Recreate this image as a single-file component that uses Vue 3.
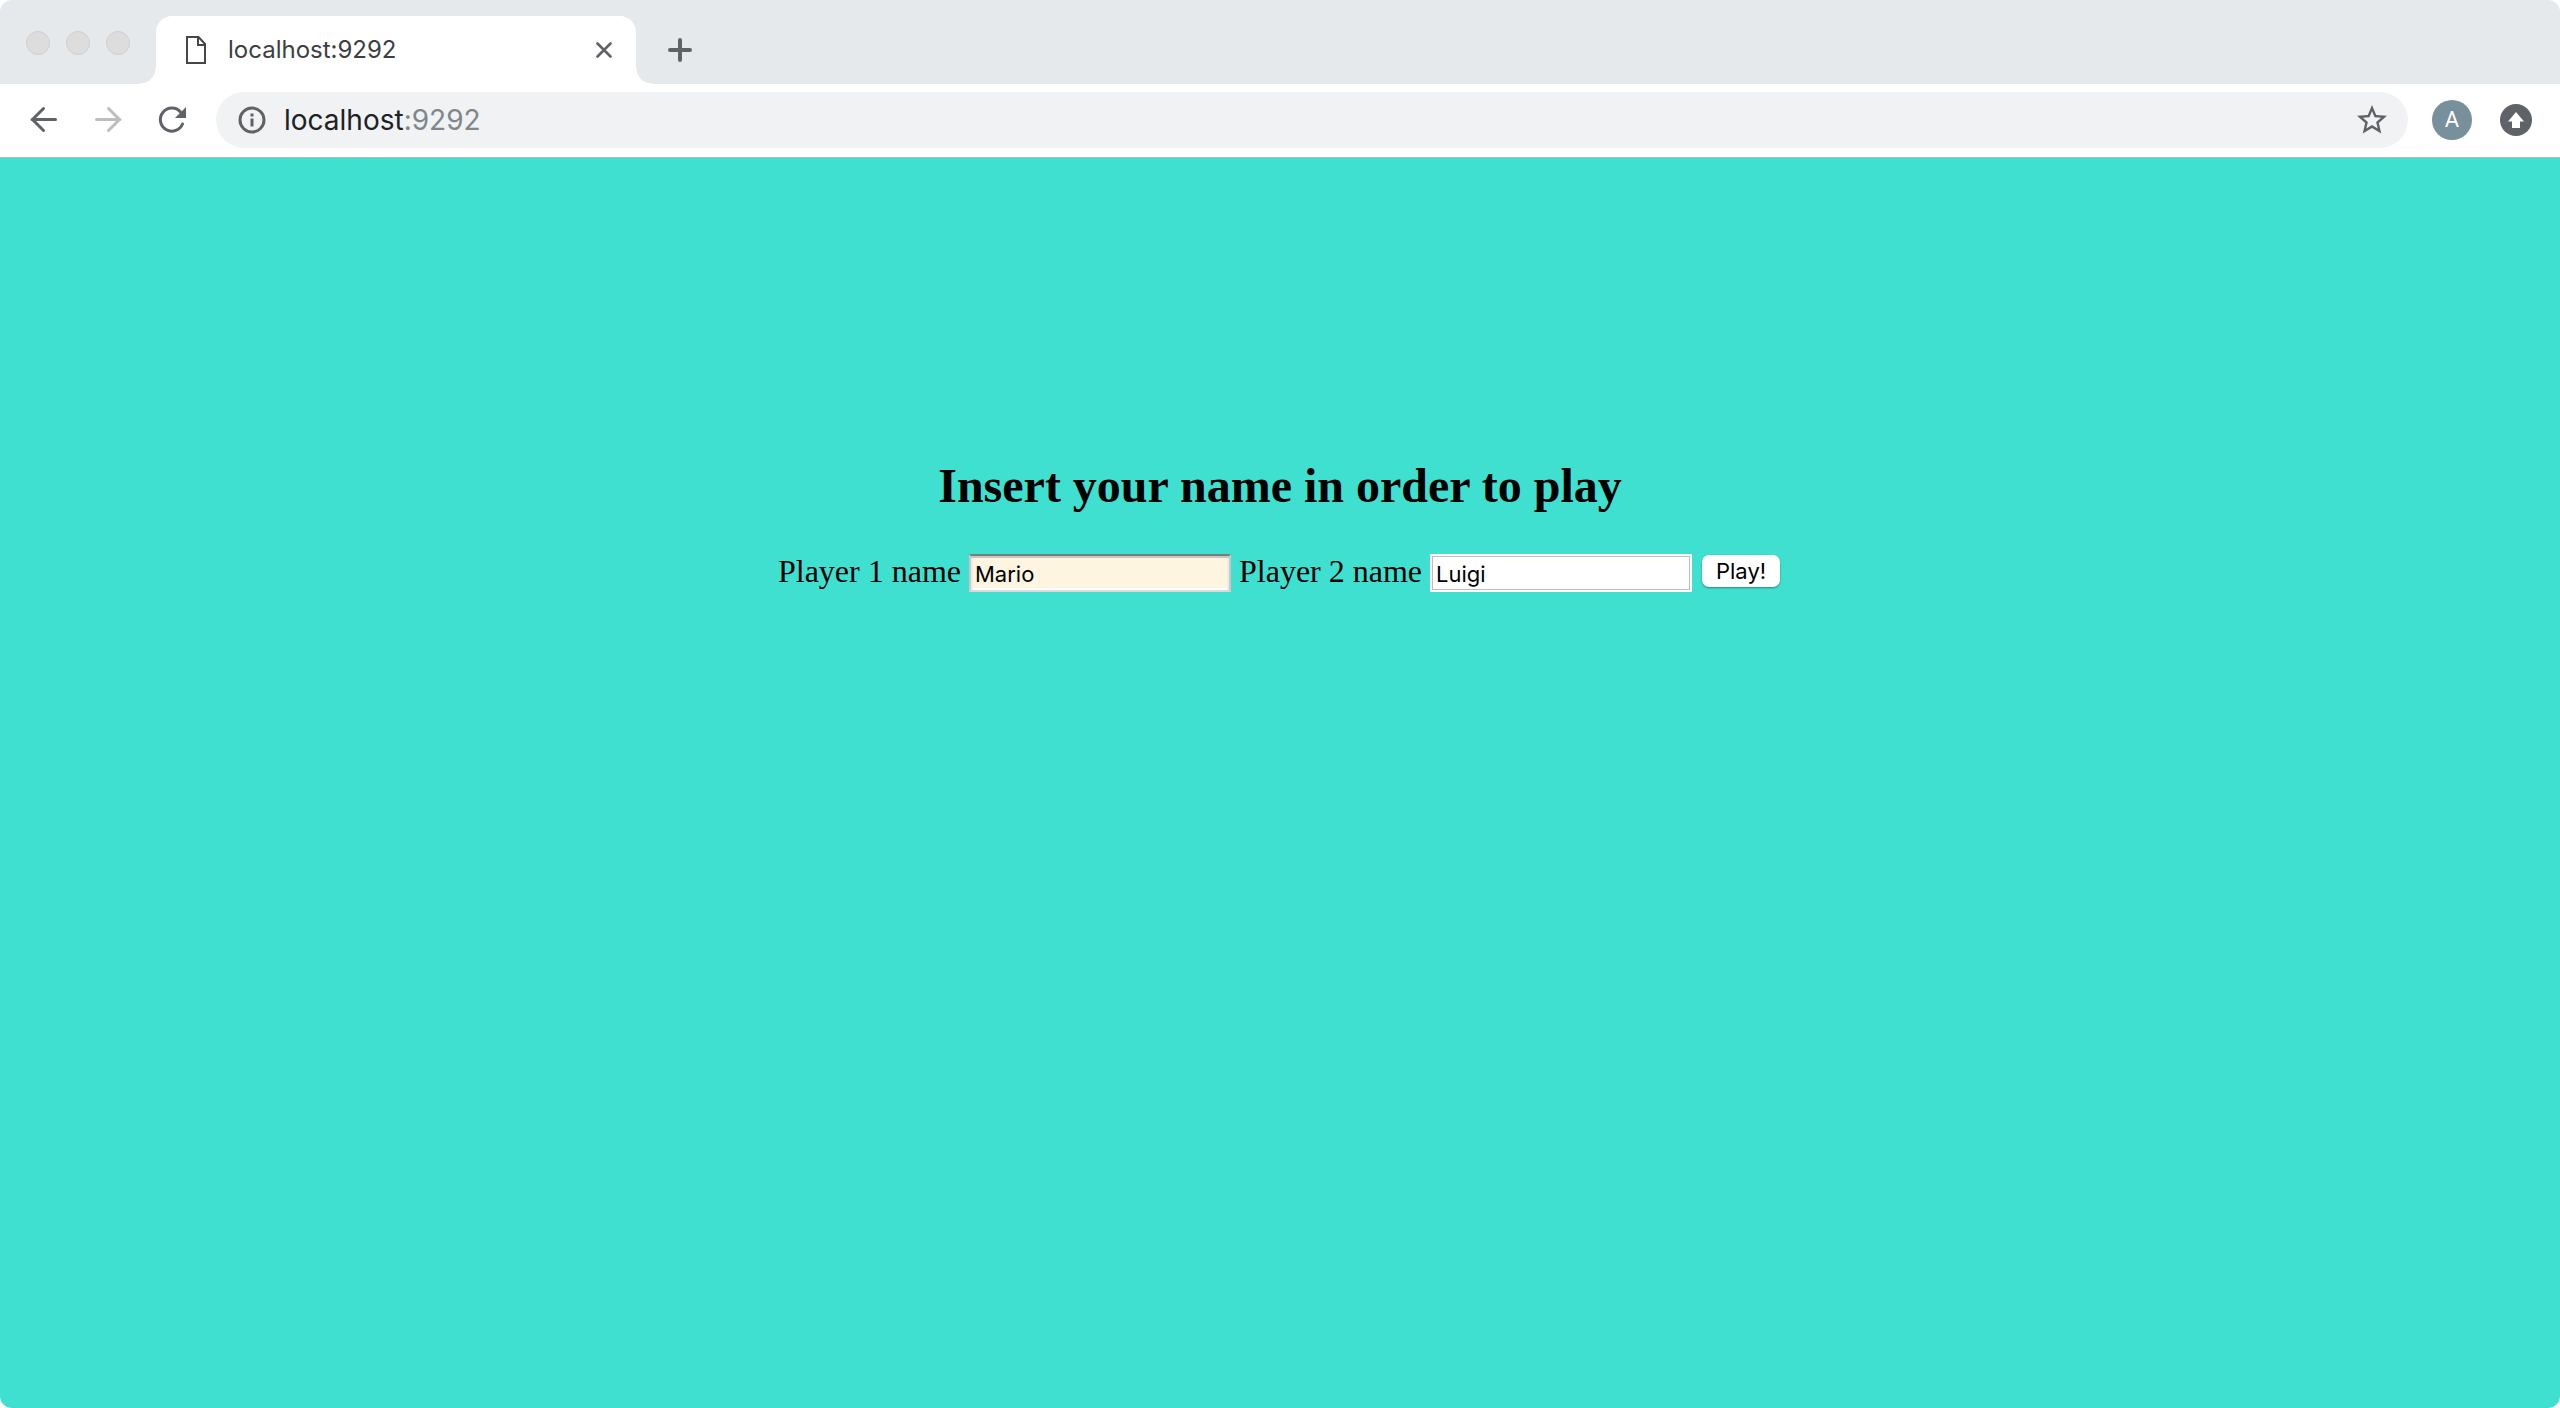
<script setup>
import { ref } from 'vue'

const address = ref('localhost:9292')
const playerOne = ref('Mario')
const playerTwo = ref('Luigi')
</script>

<template>
  <div class="window">
    <header class="tab-strip">
      <div class="lights">
        <span class="light"></span>
        <span class="light"></span>
        <span class="light"></span>
      </div>
      <div class="tab">
        <svg class="page-icon" width="20" height="28" viewBox="0 0 20 28" fill="none" stroke="#464646" stroke-width="2">
          <path d="M1 1H12.500L19 8V27H1Z" />
          <path d="M12 1V9H19" />
        </svg>
        <span class="tab-title">localhost:9292</span>
        <button class="icon-button close" type="button" aria-label="Close tab">
          <svg width="16" height="16" viewBox="0 0 16 16" stroke="#5f6368" stroke-width="2.600" stroke-linecap="round">
            <path d="M1.500 1.500L14.500 14.500M14.500 1.500L1.500 14.500" />
          </svg>
        </button>
      </div>
      <button class="icon-button new-tab" type="button" aria-label="New tab">
        <svg width="24" height="24" viewBox="0 0 24 24" stroke="#5f6368" stroke-width="4" stroke-linecap="round">
          <path d="M12 2V22M2 12H22" />
        </svg>
      </button>
    </header>

    <nav class="toolbar">
      <button class="icon-button" type="button" aria-label="Back">
        <svg width="32" height="32" viewBox="0 0 32 32" fill="none" stroke="#5f6368" stroke-width="3" stroke-linecap="round">
          <path d="M27.500 15.500H4M15.500 4.500L4.500 15.500L15.500 26.500" />
        </svg>
      </button>
      <button class="icon-button" type="button" aria-label="Forward">
        <svg width="32" height="32" viewBox="0 0 32 32" fill="none" stroke="#bbbdbf" stroke-width="3" stroke-linecap="round">
          <path d="M4.500 15.500H28M16.500 4.500L27.500 15.500L16.500 26.500" />
        </svg>
      </button>
      <button class="icon-button" type="button" aria-label="Reload">
        <svg width="32" height="32" viewBox="0 0 32 32" fill="none" stroke="#5f6368" stroke-width="3" stroke-linecap="round">
          <path d="M26.500 20A11.500 11.500 0 1 1 24.500 8" />
          <path d="M30 3V14H19Z" fill="#5f6368" stroke="none" />
        </svg>
      </button>
      <div class="omnibox">
        <svg class="info" width="28" height="28" viewBox="0 0 28 28" fill="none" stroke="#5f6368" stroke-width="3">
          <circle cx="14" cy="14" r="12" />
          <path d="M14 12.500V20.500M14 7.500V10.500" />
        </svg>
        <div class="url">
          <input v-model="address" class="url-input" type="text" aria-label="Address" />
          <span class="url-shown" aria-hidden="true">localhost<span class="port">:9292</span></span>
        </div>
        <button class="icon-button" type="button" aria-label="Bookmark this page">
          <svg width="36" height="36" viewBox="0 0 24 24" fill="#5f6368">
            <path d="M22 9.240l-7.190-.620L12 2 9.190 8.630 2 9.240l5.460 4.730L5.820 21 12 17.270 18.180 21l-1.630-7.030L22 9.240zM12 15.400l-3.760 2.270 1-4.280-3.320-2.880 4.380-.380L12 6.100l1.710 4.040 4.380.380-3.320 2.880 1 4.280L12 15.400z" />
          </svg>
        </button>
      </div>
      <button class="icon-button avatar" type="button" aria-label="Profile">A</button>
      <button class="icon-button" type="button" aria-label="Update">
        <svg width="32" height="32" viewBox="0 0 32 32">
          <circle cx="16" cy="16" r="16" fill="#5f6368" />
          <path d="M16 8L24 17.500H20V24H12V17.500H8Z" fill="#fff" />
        </svg>
      </button>
    </nav>

    <main class="page">
      <h2 class="heading">Insert your name in order to play</h2>
      <form class="players" @submit.prevent>
        <label for="player-one">Player 1 name</label>
        <input id="player-one" v-model="playerOne" class="field filled" type="text" />
        <label for="player-two">Player 2 name</label>
        <input id="player-two" v-model="playerTwo" class="field" type="text" />
        <button class="play" type="submit">Play!</button>
      </form>
    </main>
  </div>
</template>

<style>
body {
  margin: 0;
  background: #fff;
}
</style>

<style scoped>
.window {
  display: flex;
  flex-direction: column;
  min-height: 100vh;
  overflow: hidden;
  border-radius: 12px;
  background: #fff;
  font-family: Inter, Roboto, sans-serif;
}

.icon-button {
  display: flex;
  align-items: center;
  justify-content: center;
  flex: none;
  padding: 0;
  border: 0;
  background: none;
}

.tab-strip {
  display: flex;
  height: 84px;
  background: #e5e9ec;
}

.lights {
  display: flex;
  gap: 16px;
  padding: 31px 26px 0;
}

.light {
  box-sizing: border-box;
  width: 24px;
  height: 24px;
  border: 1px solid #cfcfcf;
  border-radius: 50%;
  background: #dddddd;
}

.tab {
  position: relative;
  display: flex;
  align-items: center;
  box-sizing: border-box;
  width: 480px;
  height: 68px;
  margin-top: 16px;
  padding: 0 24px 0 30px;
  border-radius: 16px 16px 0 0;
  background: #fff;
}

.tab::before,
.tab::after {
  content: '';
  position: absolute;
  bottom: 0;
  width: 16px;
  height: 16px;
}

.tab::before {
  right: 100%;
  background: radial-gradient(circle at 0 0, #e5e9ec 15px, #fff 16px);
}

.tab::after {
  left: 100%;
  background: radial-gradient(circle at 100% 0, #e5e9ec 15px, #fff 16px);
}

.tab-title {
  flex: 1;
  margin-left: 22px;
  color: #3c4043;
  font-size: 24px;
  line-height: 32px;
}

.new-tab {
  width: 24px;
  height: 24px;
  margin: 38px 0 0 32px;
}

.toolbar {
  display: flex;
  align-items: center;
  gap: 32px;
  box-sizing: border-box;
  height: 74px;
  padding: 0 28px 1px;
  border-bottom: 1px solid #b5b8ba;
}

.omnibox {
  display: flex;
  align-items: center;
  flex: 1;
  box-sizing: border-box;
  height: 56px;
  margin: 0 -8px 0 -4px;
  padding: 0 18px 0 22px;
  border-radius: 28px;
  background: #f0f2f4;
}

.info {
  flex: none;
}

.url {
  position: relative;
  flex: 1;
  margin-left: 18px;
  font-size: 28px;
  line-height: 36px;
}

.url-input {
  display: block;
  width: 100%;
  height: 36px;
  padding: 0;
  border: 0;
  outline: 0;
  background: none;
  color: transparent;
  font: inherit;
}

.url-shown {
  position: absolute;
  top: 0;
  left: 0;
  color: #202124;
  pointer-events: none;
}

.port {
  color: #80868b;
}

.avatar {
  width: 40px;
  height: 40px;
  margin-right: -4px;
  border-radius: 50%;
  background: #78909c;
  color: #fff;
  font-family: Roboto, sans-serif;
  font-size: 22px;
  line-height: 40px;
}

.page {
  flex: 1;
  padding-top: 300px;
  background: #40e0d0;
  color: #000;
  font-family: "Liberation Serif", serif;
  font-size: 32px;
  line-height: 34px;
}

.heading {
  margin: 0;
  font-size: 48px;
  font-weight: 700;
  line-height: 56px;
  text-align: center;
}

.players {
  display: flex;
  align-items: flex-start;
  justify-content: center;
  gap: 8px;
  margin-top: 40px;
}

.field {
  box-sizing: border-box;
  width: 262px;
  height: 38px;
  padding: 2px 4px 0;
  border: 2px solid #fff;
  border-radius: 0;
  outline: 0;
  background: #fff;
  box-shadow: inset 0 0 0 1px #bdbdbd;
  color: #000;
  font-family: Inter, sans-serif;
  font-size: 22px;
}

.filled {
  border-color: #7b7b7b #c9c9c9 #dadada;
  background: #fdf5df;
  box-shadow: inset 0 2px #c9c6bd, inset 2px 0 #efece6, inset -2px 0 #efece6, inset 0 -2px #fff;
}

.play {
  width: 78px;
  height: 32px;
  margin: 1px 2px 0;
  padding: 0;
  border: 0;
  border-radius: 7px;
  background: #fff;
  box-shadow: 0 1px 2px rgba(0, 0, 0, 0.4);
  color: #000;
  font-family: Inter, sans-serif;
  font-size: 22px;
  line-height: 32px;
}
</style>
